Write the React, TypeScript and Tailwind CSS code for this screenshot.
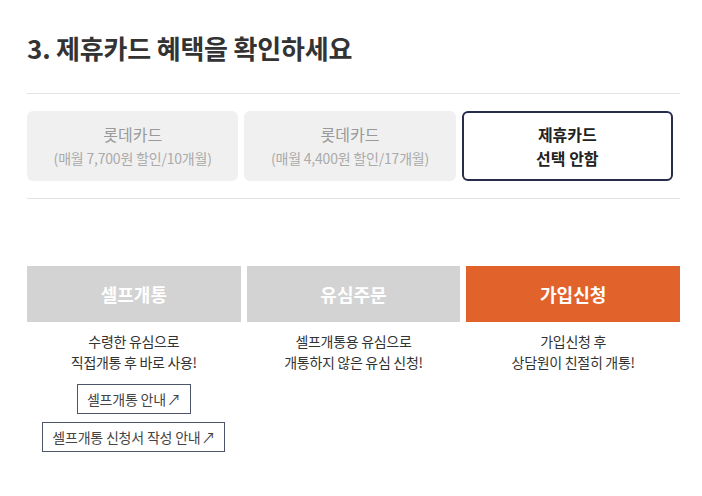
import React from 'react';

const cards = [
    { title: '롯데카드', sub: '(매월 7,700원 할인/10개월)', active: false },
    { title: '롯데카드', sub: '(매월 4,400원 할인/17개월)', active: false },
    { title: '제휴카드', sub: '선택 안함', active: true },
];

const tabs = [
    { label: '셀프개통', desc: ['수령한 유심으로', '직접개통 후 바로 사용!'], active: false },
    { label: '유심주문', desc: ['셀프개통용 유심으로', '개통하지 않은 유심 신청!'], active: false },
    { label: '가입신청', desc: ['가입신청 후', '상담원이 친절히 개통!'], active: true },
];

const LinkBox: React.FC<{ label: string }> = ({ label }) => (
    <a className="inline-flex items-center h-[30px] px-[9px] border border-[#4b5468] text-[14px] text-[#444] leading-none tracking-[-0.2px]">
        {label}
        <span className="ml-[1px]">↗</span>
    </a>
);

export default function App() {
    return (
        <div
            className="w-[702px] h-[496px] bg-white"
            style={{ fontFamily: '"Noto Sans CJK KR", "Noto Sans", sans-serif' }}
        >
            <div className="ml-[27px] w-[653px] pt-[31px]">
                <h2 className="text-[26px] leading-[34px] font-bold text-[#333] tracking-[-0.2px]">
                    3. 제휴카드 혜택을 확인하세요
                </h2>

                <div className="mt-[28px] border-t border-[#e3e3e3]" />

                <div className="w-[646px] grid grid-cols-3 gap-[6px] mt-[17px]">
                    {cards.map((c, i) => (
                        <div
                            key={i}
                            className={
                                c.active
                                    ? 'h-[70px] rounded-[6px] border-2 border-[#272c4c] bg-white flex flex-col items-center justify-center'
                                    : 'h-[70px] rounded-[6px] bg-[#f0f0f0] flex flex-col items-center justify-center'
                            }
                        >
                            <div
                                className={
                                    c.active
                                        ? 'text-[16px] leading-[24px] font-bold text-[#222]'
                                        : 'text-[16px] leading-[24px] text-[#999]'
                                }
                            >
                                {c.title}
                            </div>
                            <div
                                className={
                                    c.active
                                        ? 'text-[16px] leading-[24px] font-bold text-[#222]'
                                        : 'text-[14px] leading-[24px] text-[#aaa] tracking-[-0.2px]'
                                }
                            >
                                {c.sub}
                            </div>
                        </div>
                    ))}
                </div>

                <div className="mt-[17px] border-t border-[#e3e3e3]" />

                <div className="grid grid-cols-3 gap-[6px] mt-[67px]">
                    {tabs.map((t, i) => (
                        <div key={i} className="flex flex-col items-center">
                            <div
                                className={
                                    t.active
                                        ? 'w-full h-[56px] bg-[#e2622b] flex items-center justify-center text-white text-[18px] font-bold'
                                        : 'w-full h-[56px] bg-[#d3d3d3] flex items-center justify-center text-white text-[18px] font-bold'
                                }
                            >
                                {t.label}
                            </div>
                            <div className="mt-[9px] text-center text-[14px] leading-[21px] text-[#333] tracking-[-0.3px]">
                                {t.desc.map((d, j) => (
                                    <div key={j}>{d}</div>
                                ))}
                            </div>
                            {i === 0 && (
                                <div className="mt-[11px] flex flex-col items-center gap-[8px]">
                                    <LinkBox label="셀프개통 안내" />
                                    <LinkBox label="셀프개통 신청서 작성 안내" />
                                </div>
                            )}
                        </div>
                    ))}
                </div>
            </div>
        </div>
    );
}
